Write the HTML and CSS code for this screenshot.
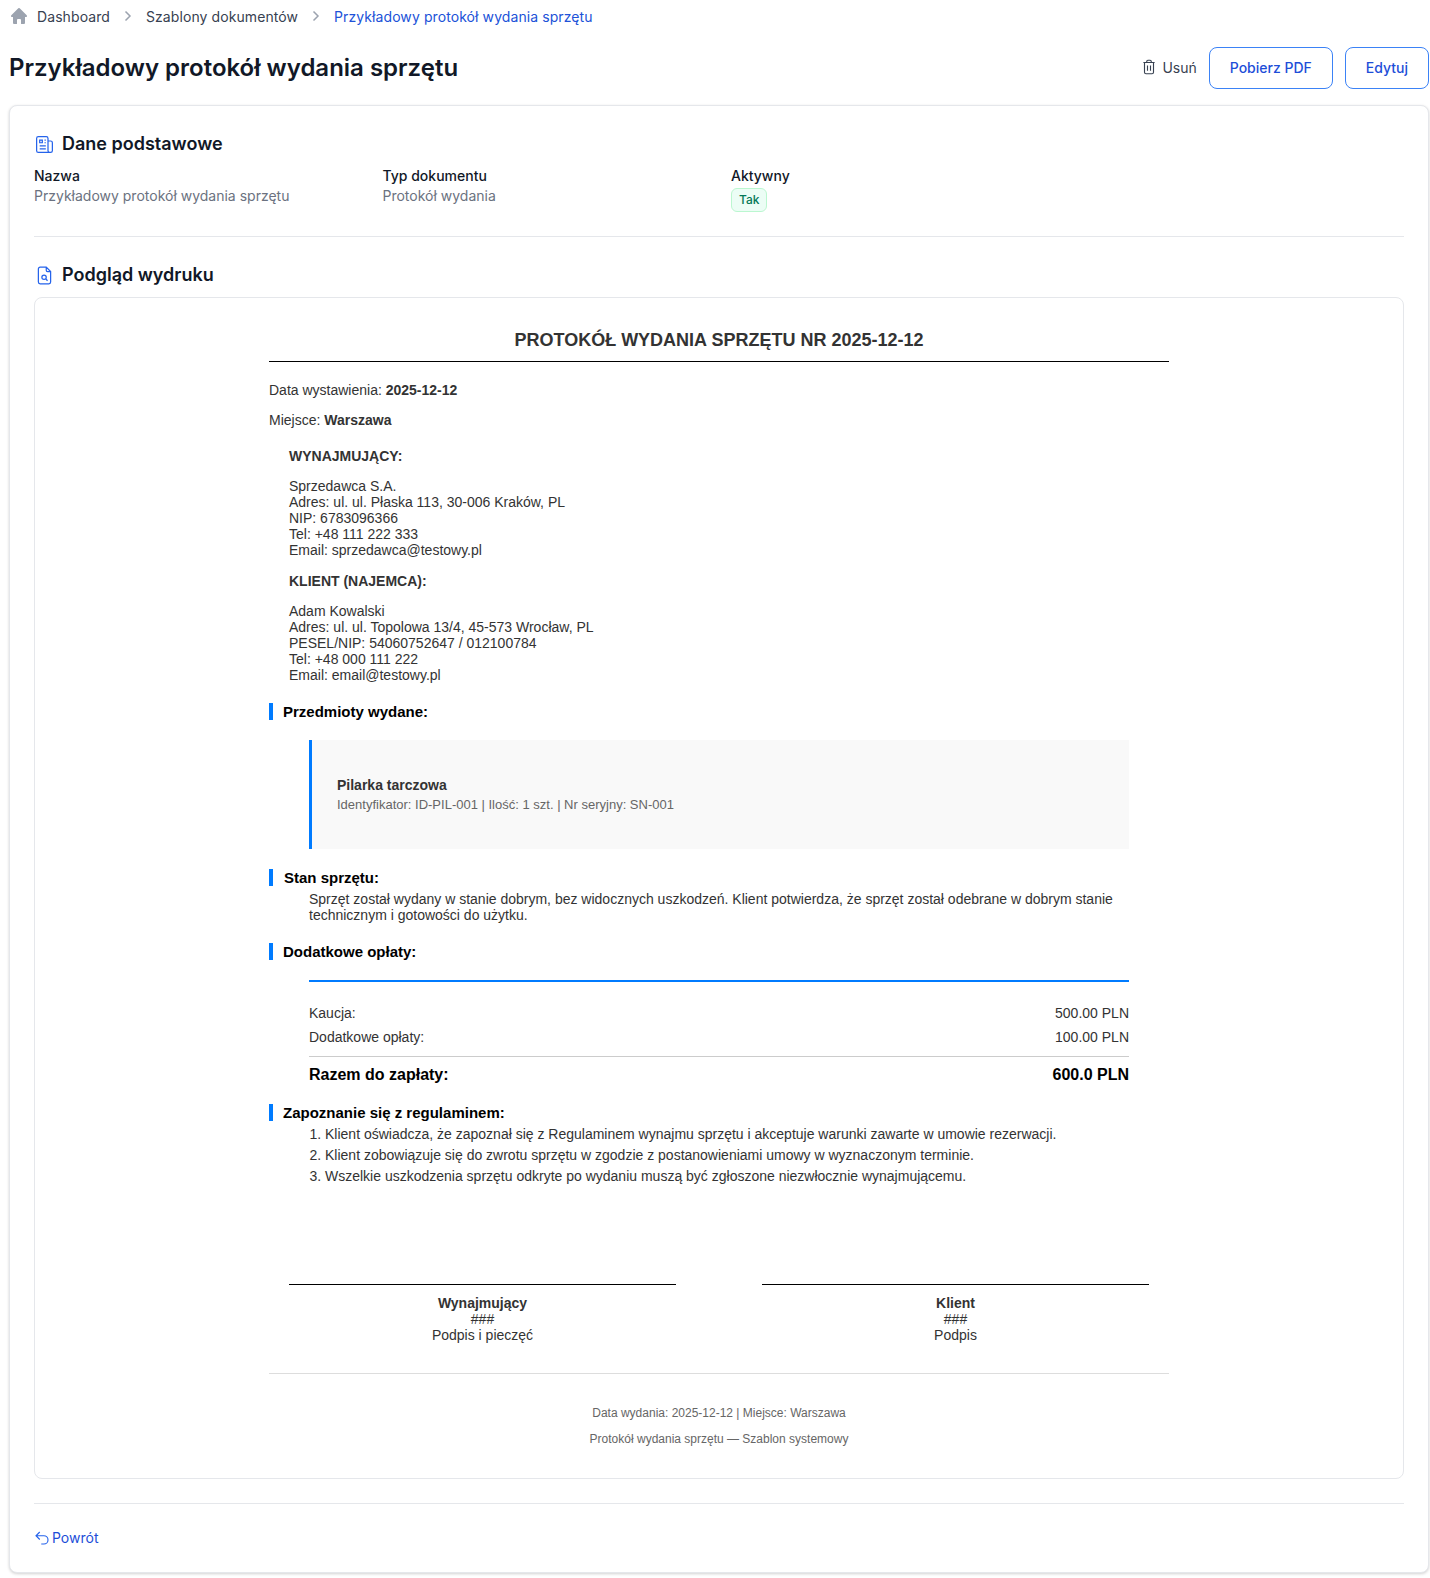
FILE: index.html
```html
<!DOCTYPE html>
<html lang="pl">
<head>
<meta charset="utf-8">
<title>Przykładowy protokół wydania sprzętu</title>
<link rel="stylesheet" href="styles.css">
</head>
<body>
<nav class="crumbs">
  <svg class="crumb-home" viewBox="0 0 20 20"><path d="M10.7 2.3a1 1 0 0 0-1.4 0l-7 7A1 1 0 0 0 3 11h1v6a1 1 0 0 0 1 1h2.500a.5.5 0 0 0 .5-.5V14a1 1 0 0 1 1-1h2a1 1 0 0 1 1 1v3.500a.5.5 0 0 0 .5.5H15a1 1 0 0 0 1-1v-6h1a1 1 0 0 0 .7-1.700z"/></svg>
  <a>Dashboard</a>
  <svg class="crumb-sep" viewBox="0 0 12 12"><path d="M3.500 1.500L8 6l-4.500 4.500"/></svg>
  <a>Szablony dokumentów</a>
  <svg class="crumb-sep" viewBox="0 0 12 12"><path d="M3.500 1.500L8 6l-4.500 4.500"/></svg>
  <a class="current">Przykładowy protokół wydania sprzętu</a>
</nav>
<header class="head">
  <h1>Przykładowy protokół wydania sprzętu</h1>
  <div class="actions">
    <a class="del"><svg viewBox="0 0 24 24"><path d="M4.500 6h15M9 6V4.500A1.500 1.500 0 0 1 10.500 3h3A1.500 1.500 0 0 1 15 4.500V6M6 6v13a2 2 0 0 0 2 2h8a2 2 0 0 0 2-2V6M10 10v7M14 10v7"/></svg>Usuń</a>
    <a class="btn btn-pdf">Pobierz PDF</a>
    <a class="btn btn-edit">Edytuj</a>
  </div>
</header>
<main class="card">
  <h2 class="sec"><svg viewBox="0 0 24 24"><path d="M16 5v14a2 2 0 0 0 2 2H5a2 2 0 0 1-2-2V5a2 2 0 0 1 2-2h9a2 2 0 0 1 2 2zM16 8h3a2 2 0 0 1 2 2v9a2 2 0 0 1-2 2h-1M6.500 7h3v3h-3zM12 7h1.500M12 10h1.500M6.500 13.500h7M6.500 17h7"/></svg>Dane podstawowe</h2>
  <div class="fields">
    <div><div class="lbl">Nazwa</div><div class="val">Przykładowy protokół wydania sprzętu</div></div>
    <div><div class="lbl">Typ dokumentu</div><div class="val">Protokół wydania</div></div>
    <div><div class="lbl">Aktywny</div><span class="badge">Tak</span></div>
  </div>
  <hr class="rule rule-a">
  <h2 class="sec"><svg viewBox="0 0 24 24"><path d="M14 2.500H7a2 2 0 0 0-2 2v15a2 2 0 0 0 2 2h10a2 2 0 0 0 2-2V7.500zM14 2.500v3.500a1.500 1.500 0 0 0 1.500 1.500H19"/><circle cx="11.500" cy="14" r="2.500"/><path d="M13.500 16l2 2"/></svg>Podgląd wydruku</h2>
  <section class="preview">
    <article class="doc">
      <h3 class="doc-title">PROTOKÓŁ WYDANIA SPRZĘTU NR 2025-12-12</h3>
      <p class="meta">Data wystawienia: <b>2025-12-12</b></p>
      <p class="meta">Miejsce: <b>Warszawa</b></p>
      <div class="party">
        <p class="party-name">WYNAJMUJĄCY:</p>
        <p>Sprzedawca S.A.<br>Adres: ul. ul. Płaska 113, 30-006 Kraków, PL<br>NIP: 6783096366<br>Tel: +48 111 222 333<br>Email: sprzedawca@testowy.pl</p>
        <p class="party-name second">KLIENT (NAJEMCA):</p>
        <p>Adam Kowalski<br>Adres: ul. ul. Topolowa 13/4, 45-573 Wrocław, PL<br>PESEL/NIP: 54060752647 / 012100784<br>Tel: +48 000 111 222<br>Email: email@testowy.pl</p>
      </div>
      <h4 class="mark mark-items">Przedmioty wydane:</h4>
      <div class="item">
        <div class="item-name">Pilarka tarczowa</div>
        <div class="item-info">Identyfikator: ID-PIL-001 | Ilość: 1 szt. | Nr seryjny: SN-001</div>
      </div>
      <h4 class="mark mark-state">Stan sprzętu:</h4>
      <p class="state">Sprzęt został wydany w stanie dobrym, bez widocznych uszkodzeń. Klient potwierdza, że sprzęt został odebrane w dobrym stanie technicznym i gotowości do użytku.</p>
      <h4 class="mark mark-fees">Dodatkowe opłaty:</h4>
      <div class="fees">
        <div class="fee"><span>Kaucja:</span><span>500.00 PLN</span></div>
        <div class="fee"><span>Dodatkowe opłaty:</span><span>100.00 PLN</span></div>
        <div class="total"><span>Razem do zapłaty:</span><span>600.0 PLN</span></div>
      </div>
      <h4 class="mark mark-terms">Zapoznanie się z regulaminem:</h4>
      <ol class="terms">
        <li>Klient oświadcza, że zapoznał się z Regulaminem wynajmu sprzętu i akceptuje warunki zawarte w umowie rezerwacji.</li>
        <li>Klient zobowiązuje się do zwrotu sprzętu w zgodzie z postanowieniami umowy w wyznaczonym terminie.</li>
        <li>Wszelkie uszkodzenia sprzętu odkryte po wydaniu muszą być zgłoszone niezwłocznie wynajmującemu.</li>
      </ol>
      <div class="signs">
        <div class="sign"><b>Wynajmujący</b><br>###<br>Podpis i pieczęć</div>
        <div class="sign"><b>Klient</b><br>###<br>Podpis</div>
      </div>
      <footer class="doc-foot">
        <p>Data wydania: 2025-12-12 | Miejsce: Warszawa</p>
        <p>Protokół wydania sprzętu — Szablon systemowy</p>
      </footer>
    </article>
  </section>
  <hr class="rule rule-b">
  <a class="back"><svg viewBox="0 0 24 24"><path d="M9 14L4 9l5-5M4 9h10.500a5.500 5.500 0 0 1 0 11H11"/></svg>Powrót</a>
</main>
</body>
</html>
```
FILE: styles.css
```css
* { box-sizing: border-box; }
html, body { margin: 0; padding: 0; }
body {
  background: #fff;
  font-family: Inter, "Liberation Sans", sans-serif;
  color: #111827;
  padding: 0 1px 0 9px;
  height: 1578px;
  overflow: hidden;
}
.crumbs {
  height: 33px;
  padding-bottom: 1px;
  display: flex;
  align-items: center;
  font-size: 14px;
  letter-spacing: .085px;
  color: #374151;
}
.crumb-home { width: 20px; height: 20px; fill: #9ca3af; margin-right: 8px; }
.crumb-sep { width: 12px; height: 12px; fill: none; stroke: #9ca3af; stroke-width: 1.500; margin: 0 12px; }
.current { color: #2052d8; }
.head {
  height: 72px;
  display: flex;
  align-items: center;
  justify-content: space-between;
  padding-bottom: 3px;
}
h1 { margin: 0; font-size: 24px; line-height: 32px; font-weight: 600; color: #111827; }
.actions { display: flex; align-items: center; gap: 12px; font-size: 14px; }
.del { display: flex; align-items: center; gap: 4px; color: #374151; padding-bottom: 1px; }
.del svg { width: 18px; height: 18px; fill: none; stroke: #374151; stroke-width: 1.500; }
.btn {
  height: 42px;
  display: flex;
  align-items: center;
  padding: 0 20px 1px;
  border: 1px solid #3b82f6;
  border-radius: 8px;
  color: #1d4ed8;
  font-weight: 500;
  background: #fff;
}
.card {
  height: 1468px;
  border: 1px solid #e5e7eb;
  border-radius: 8px;
  box-shadow: 0 1px 3px rgba(0,0,0,.18);
  padding: 24px;
  background: #fff;
}
.sec {
  margin: 0;
  display: flex;
  align-items: center;
  gap: 7px;
  font-size: 18px;
  line-height: 28px;
  font-weight: 600;
  color: #111827;
}
.sec svg { width: 21px; height: 21px; fill: none; stroke: #2563eb; stroke-width: 1.400; }
.fields { display: grid; grid-template-columns: repeat(4, 1fr); gap: 24px; margin-top: 8px; font-size: 14px; line-height: 20px; }
.lbl { font-weight: 500; color: #111827; }
.val { color: #6b7280; }
.badge {
  display: inline-block;
  margin-top: 2px;
  height: 24px;
  line-height: 22px;
  padding: 0 7px;
  border: 1px solid #bbf7d0;
  border-radius: 6px;
  background: #ecfdf5;
  color: #047857;
  font-size: 12px;
  font-weight: 500;
}
.rule { border: 0; border-top: 1px solid #e5e7eb; margin: 0; }
.rule-a { margin: 24px 0; }
.preview {
  margin-top: 8px;
  height: 1182px;
  border: 1px solid #e5e7eb;
  border-radius: 8px;
  padding-top: 29px;
}
.doc {
  width: 900px;
  margin: 0 auto;
  font-family: "Liberation Sans", Arial, sans-serif;
  font-size: 14px;
  line-height: 16px;
  color: #333;
}
.doc p { margin: 0; }
.doc-title {
  margin: 0;
  text-align: center;
  font-size: 18px;
  line-height: 26px;
  font-weight: 700;
  color: #333;
  padding-bottom: 8px;
  border-bottom: 1px solid #000;
}
.doc .meta { margin-top: 14px; }
.doc .doc-title + .meta { margin-top: 20px; }
.party { padding: 0 20px; margin-top: 20px; }
.doc .party-name { font-weight: 700; margin-bottom: 14px; }
.doc .party-name.second { margin-top: 15px; }
.mark {
  margin: 20px 0 0;
  font-size: 15px;
  line-height: 17px;
  font-weight: 700;
  color: #000;
  border-left: 4px solid #007bff;
  padding-left: 10px;
}
.item {
  margin: 20px 40px 0;
  height: 109px;
  background: #f9f9f9;
  border-left: 3px solid #007bff;
  padding: 36px 25px 0;
}
.item-name { font-weight: 700; line-height: 18px; }
.item-info { font-size: 13px; line-height: 22px; color: #666; }
.mark-state { margin-top: 20px; padding-left: 11px; }
.doc .state { margin: 5px 40px 0; }
.mark-fees { margin-top: 20px; }
.fees { margin: 20px 40px 0; border-top: 2px solid #007bff; padding-top: 19px; }
.fee { display: flex; justify-content: space-between; height: 24px; align-items: center; }
.total {
  display: flex;
  justify-content: space-between;
  margin-top: 7px;
  border-top: 1px solid #ccc;
  padding-top: 9px;
  font-size: 16px;
  line-height: 18px;
  font-weight: 700;
  color: #000;
}
.mark-terms { margin-top: 20px; }
.terms { margin: 3px 40px 0; padding: 0 0 0 16px; line-height: 21px; }
.signs { display: flex; justify-content: space-between; padding: 0 20px; margin-top: 97px; }
.sign { width: 387px; border-top: 1px solid #000; padding-top: 10px; text-align: center; }
.doc-foot {
  margin-top: 30px;
  border-top: 1px solid #ddd;
  padding-top: 32px;
  text-align: center;
  font-size: 12px;
  line-height: 14px;
  color: #666;
}
.doc-foot p + p { margin-top: 12px; }
.rule-b { margin: 24px 0 0; }
.back { display: inline-flex; align-items: center; gap: 1px; margin-top: 24px; font-size: 14px; line-height: 20px; color: #1d4ed8; }
.back svg { width: 18px; height: 18px; margin-left: -1px; fill: none; stroke: #2563eb; stroke-width: 1.500; }
```
